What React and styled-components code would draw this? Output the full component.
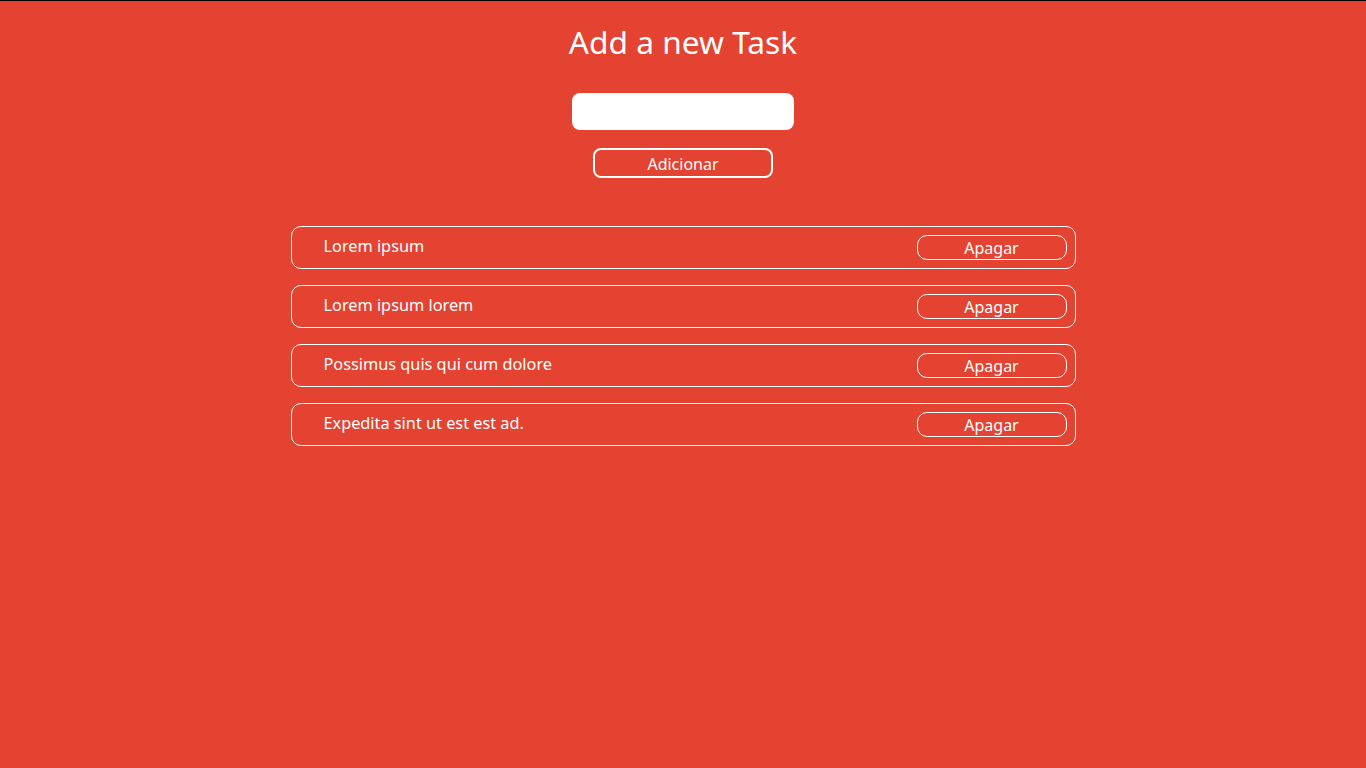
import React, { useState } from 'react';
import styled, { createGlobalStyle } from 'styled-components';

const GlobalStyle = createGlobalStyle`
  * { box-sizing: border-box; }
  html, body {
    margin: 0;
    padding: 0;
    height: 100%;
  }
  body {
    background: #e44332;
    border-top: 1px solid #000;
    font-family: "Noto Sans", "Open Sans", sans-serif;
    color: #fff;
  }
`;

const initialTasks = [
  'Lorem ipsum',
  'Lorem ipsum lorem',
  'Possimus quis qui cum dolore',
  'Expedita sint ut est est ad.',
];

const App = () => {
  const [tasks, setTasks] = useState(initialTasks);
  const [value, setValue] = useState('');

  const addTask = () => {
    if (!value.trim()) return;
    setTasks([...tasks, value]);
    setValue('');
  };

  return (
    <>
      <GlobalStyle />
      <Container>
        <Title>Add a new Task</Title>
        <Input value={value} onChange={(e) => setValue(e.target.value)} />
        <AddButton onClick={addTask}>Adicionar</AddButton>
        <List>
          {tasks.map((task, index) => (
            <Item key={index}>
              <ItemText>{task}</ItemText>
              <DeleteButton onClick={() => setTasks(tasks.filter((_, i) => i !== index))}>
                Apagar
              </DeleteButton>
            </Item>
          ))}
        </List>
      </Container>
    </>
  );
};

export default App;

const Container = styled.div`
  display: flex;
  flex-direction: column;
  align-items: center;
  padding-top: 19px;
`;

const Title = styled.h1`
  margin: 0;
  font-size: 31.7px;
  font-weight: 400;
  line-height: 44px;
`;

const Input = styled.input`
  margin-top: 29px;
  width: 222px;
  height: 37px;
  border: none;
  border-radius: 8px;
  background: #fff;
  outline: none;
  padding: 0 10px;
  font-family: inherit;
  font-size: 16px;
`;

const AddButton = styled.button`
  margin-top: 18px;
  width: 180px;
  height: 30px;
  padding: 2px 0 0;
  border: 2px solid #fff;
  border-radius: 8px;
  background: transparent;
  color: #fff;
  font-family: inherit;
  font-size: 16px;
  cursor: pointer;
`;

const List = styled.ul`
  list-style: none;
  margin: 48px 0 0;
  padding: 0;
  width: 785px;
  display: flex;
  flex-direction: column;
  gap: 16px;
`;

const Item = styled.li`
  display: flex;
  align-items: center;
  justify-content: space-between;
  height: 43px;
  padding: 0 8px 0 32px;
  border: 1px solid #fff;
  border-radius: 10px;
`;

const ItemText = styled.span`
  font-size: 16.3px;
  margin-top: -3px;
`;

const DeleteButton = styled.button`
  width: 150px;
  height: 25px;
  border: 1px solid #fff;
  border-radius: 10px;
  background: transparent;
  color: #fff;
  font-family: inherit;
  font-size: 16px;
  line-height: 1;
  cursor: pointer;
`;
